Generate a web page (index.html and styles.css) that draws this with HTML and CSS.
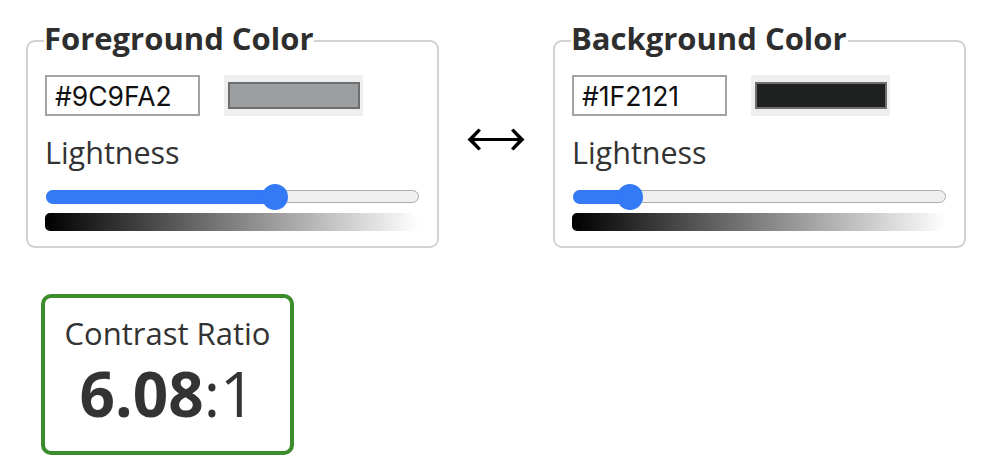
FILE: index.html
```html
<!DOCTYPE html>
<html lang="en">
<head>
<meta charset="utf-8">
<title>Contrast Checker</title>
<link rel="stylesheet" href="styles.css">
</head>
<body>
<div class="page">
  <div class="pickers">
    <fieldset class="picker">
      <legend class="picker-title">Foreground Color</legend>
      <div class="color-row">
        <input class="hex-input" type="text" value="#9C9FA2">
        <div class="swatch"><div class="swatch-fill" style="background:#9C9FA2"></div></div>
      </div>
      <div class="label">Lightness</div>
      <div class="range" style="--p:0.624">
        <div class="track">
          <div class="fill"></div>
          <div class="thumb"></div>
        </div>
      </div>
      <div class="gradient"></div>
    </fieldset>

    <div class="swap">
      <svg class="swap-icon" width="58" height="23" viewBox="0 0 58 23" aria-hidden="true">
        <line x1="4" y1="11.5" x2="54" y2="11.5" stroke="#000" stroke-width="3"/>
        <path d="M0.5 11.5 L11.5 0.5 L14 2.6 L5.8 11.5 L14 20.4 L11.5 22.5 Z" fill="#000"/>
        <path d="M57.5 11.5 L46.5 0.5 L44 2.6 L52.2 11.5 L44 20.4 L46.5 22.5 Z" fill="#000"/>
      </svg>
    </div>

    <fieldset class="picker">
      <legend class="picker-title">Background Color</legend>
      <div class="color-row">
        <input class="hex-input" type="text" value="#1F2121">
        <div class="swatch"><div class="swatch-fill" style="background:#1F2121"></div></div>
      </div>
      <div class="label">Lightness</div>
      <div class="range" style="--p:0.125">
        <div class="track">
          <div class="fill"></div>
          <div class="thumb"></div>
        </div>
      </div>
      <div class="gradient"></div>
    </fieldset>
  </div>

  <div class="result">
    <div class="result-label">Contrast Ratio</div>
    <div class="result-value"><b class="ratio-num">6.08</b>:1</div>
  </div>
</div>
</body>
</html>
```

FILE: styles.css
```css
html, body {
  margin: 0;
  padding: 0;
  background: #fff;
}

body {
  font-family: "Open Sans", "DejaVu Sans", sans-serif;
  color: #333;
}

.page {
  padding: 18px 20px 0 26px;
}

.pickers {
  display: flex;
  align-items: flex-start;
}

.picker {
  width: 413px;
  box-sizing: border-box;
  margin: 0;
  min-width: 0;
  border: 2px solid #d2d2d2;
  border-radius: 9px;
  padding: 12px 18px 15px 17px;
}

.picker-title {
  font-size: 31px;
  font-weight: 700;
  line-height: 41px;
  padding: 0 1px 4px 0;
  margin-left: -1px;
  color: #2e2e2e;
}

.color-row {
  display: flex;
  align-items: flex-start;
  gap: 24px;
}

.hex-input {
  width: 155px;
  height: 41px;
  box-sizing: border-box;
  margin: 0;
  border: 2px solid #a3a3a3;
  border-radius: 0;
  padding: 0 8px;
  font-family: "Inter", "Open Sans", sans-serif;
  font-size: 26.5px;
  color: #111;
  background: #fff;
  outline: none;
}

.swatch {
  width: 139px;
  height: 41px;
  box-sizing: border-box;
  padding: 7px 3px 7px 4px;
  background: #efefef;
}

.swatch-fill {
  height: 100%;
  box-sizing: border-box;
  border: 2px solid #6e6e6e;
}

.label {
  margin-top: 16px;
  font-size: 30.5px;
  line-height: 41px;
  color: #333;
}

.range {
  margin-top: 11px;
  height: 26px;
  padding: 6px 0 0 1px;
  box-sizing: border-box;
}

.track {
  position: relative;
  height: 13px;
  box-sizing: border-box;
  border: 1.5px solid #adadad;
  border-radius: 7px;
  background: #efefef;
}

.fill {
  position: absolute;
  left: -1.5px;
  top: -1.5px;
  bottom: -1.5px;
  width: calc(13px + (100% - 26px) * var(--p));
  background: #3479f6;
  border-radius: 7px 0 0 7px;
}

.thumb {
  position: absolute;
  top: 50%;
  left: calc(13px + (100% - 26px) * var(--p));
  width: 26px;
  height: 26px;
  border-radius: 50%;
  background: #3479f6;
  transform: translate(-50%, -50%);
}

.gradient {
  margin-top: 3px;
  height: 18px;
  border-radius: 5px 0 0 5px;
  background: linear-gradient(to right, #000 0%, #fff 100%);
}

.swap {
  width: 114px;
  flex: none;
  display: flex;
  justify-content: center;
  padding-top: 110px;
}

.swap-icon {
  display: block;
}

.result {
  margin: 46px 0 0 15px;
  width: 253px;
  height: 161px;
  box-sizing: border-box;
  border: 4px solid #3c8c2c;
  border-radius: 10px;
  padding-top: 15px;
  text-align: center;
}

.result-label {
  font-size: 31px;
  line-height: 41px;
  color: #333;
}

.result-value {
  font-size: 62px;
  line-height: 74px;
  margin-top: 2px;
  color: #333;
}

.ratio-num {
  font-weight: 700;
}
```
